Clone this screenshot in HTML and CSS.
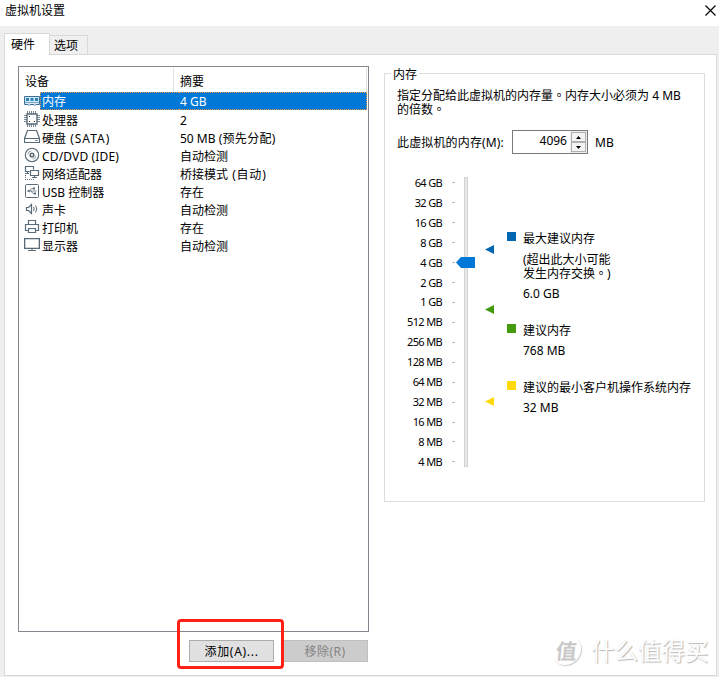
FILE: index.html
```html
<!DOCTYPE html>
<html lang="zh-CN">
<head>
<meta charset="utf-8">
<title>虚拟机设置</title>
<link rel="stylesheet" href="styles.css">
</head>
<body>
<div class="dialog">
  <header class="titlebar">
    <span>虚拟机设置</span>
    <svg class="close" width="11" height="11" viewBox="0 0 11 11"><path d="M.5.5l10 10M10.5.5l-10 10" stroke="#000" stroke-width="1.15"/></svg>
  </header>
  <nav class="tabs">
    <div class="tab active">硬件</div>
    <div class="tab">选项</div>
  </nav>
  <main class="page">
    <section class="left">
      <div class="list">
        <div class="head"><span class="name">设备</span><span class="sum">摘要</span></div>
        <div class="row selected">
          <svg class="icon" width="16" height="16" viewBox="0 0 16 16"><path d="M.5 3.5h15v8H12l-1 1-1-1H6l-1 1-1-1H.5z" fill="#d5eafa" stroke="#3d6f96"/><path d="M2 5h3v3H2zM6.500 5h3v3h-3zM11 5h3v3h-3z" fill="#2a7fbd"/><path d="M1 9.500h14" stroke="#7fa5c2"/></svg>
          <span class="name">内存</span><span class="sum">4 GB</span>
        </div>
        <div class="row">
          <svg class="icon" width="16" height="16" viewBox="0 0 16 16" fill="none" stroke="#596b78"><path d="M3.500 0v3M5.500 0v3M7.500 0v3M9.500 0v3M11.500 0v3M3.500 13v3M5.500 13v3M7.500 13v3M9.500 13v3M11.500 13v3M0 4.500h3M0 6.500h3M0 8.500h3M0 10.500h3M13 4.500h3M13 6.500h3M13 8.500h3M13 10.500h3" stroke="#78868f"/><path d="M3 3h10v10H3z" fill="#fff" stroke-width="1.400"/><path d="M5 5.500h1M10 10.500h1M5 10.500h1" stroke="#333"/></svg>
          <span class="name">处理器</span><span class="sum">2</span>
        </div>
        <div class="row">
          <svg class="icon" width="16" height="16" viewBox="0 0 16 16" fill="none" stroke="#596b78"><path d="M3.500 1.500h9l3 8v4H.5v-4zM.5 9.500h15" stroke-width="1.200"/><path d="M11.500 11.500h2"/></svg>
          <span class="name">硬盘 <span class="wide">(SATA)</span></span><span class="sum">50 MB <span class="loose">(预先分配)</span></span>
        </div>
        <div class="row">
          <svg class="icon" width="16" height="16" viewBox="0 0 16 16" fill="none" stroke="#596b78"><circle cx="8" cy="8" r="6.700" stroke-width="1.100"/><circle cx="8" cy="8" r="1.800" stroke-width="1.600"/><path d="M3.800 7.500a4.300 4.300 0 0 1 3.700-3.700M12.200 8.500a4.300 4.300 0 0 1-3.700 3.700" stroke="#9aa5ac"/></svg>
          <span class="name disc">CD/DVD (IDE)</span><span class="sum">自动检测</span>
        </div>
        <div class="row">
          <svg class="icon" width="16" height="16" viewBox="0 0 16 16" fill="none" stroke="#596b78"><path d="M5.500 6.500h-4v-5h8v3" stroke-width="1.200"/><path d="M6.500 5.500h8v5h-8zM10.500 10.500v2M8 12.500h5M3.500 6.500v2M1 8.500h4" stroke-width="1.200"/><path d="M1.500 10v5M1 14.500h9" stroke-dasharray="1 1"/></svg>
          <span class="name">网络适配器</span><span class="sum">桥接模式 <span class="auto">(自动)</span></span>
        </div>
        <div class="row">
          <svg class="icon" width="16" height="16" viewBox="0 0 16 16" fill="none" stroke="#596b78"><rect x="1.500" y="1.500" width="13" height="13" rx="1"/><path d="M3.500 8h9M5.500 8l2-2.500H10M7 8l2 2.500h2" stroke-width=".8"/><path d="M3 8l2.500-1.500v3zM9 4.500h2v2H9zM10 9.500h2v2h-2z" fill="#596b78" stroke="none"/></svg>
          <span class="name">USB 控制器</span><span class="sum">存在</span>
        </div>
        <div class="row">
          <svg class="icon" width="16" height="16" viewBox="0 0 16 16" fill="none" stroke="#596b78"><path d="M2.500 6.500h2l3-3v9l-3-3h-2z" stroke-width="1.200"/><path d="M9.500 6q1.400 2 0 4M11.500 4.500q2.600 3.500 0 7"/></svg>
          <span class="name">声卡</span><span class="sum">自动检测</span>
        </div>
        <div class="row">
          <svg class="icon" width="16" height="16" viewBox="0 0 16 16" fill="none" stroke="#596b78" stroke-width="1.200"><path d="M4.500 5.500v-4h7v4M4.500 11.500h-3v-6h13v6h-3M4.500 9.500h7v4h-7z"/></svg>
          <span class="name">打印机</span><span class="sum">存在</span>
        </div>
        <div class="row">
          <svg class="icon" width="16" height="16" viewBox="0 0 16 16" fill="none" stroke="#596b78"><path d="M.6 1.600h14.800v9.800H.6z" stroke-width="1.400"/><path d="M8 11.500v2M4 13.500h8"/></svg>
          <span class="name">显示器</span><span class="sum">自动检测</span>
        </div>
      </div>
      <div class="buttons">
        <div class="btn add">添加(A)...<i class="mark"></i></div>
        <div class="btn disabled">移除(R)</div>
      </div>
    </section>
    <section class="right">
      <fieldset class="group">
        <legend>内存</legend>
        <p class="intro">指定分配给此虚拟机的内存量<span class="stop" lang="zh-TW">。</span>内存大小必须为 4 MB<br>的倍数<span class="stop" lang="zh-TW">。</span></p>
        <div class="amount">
          <span class="label">此虚拟机的内存(M):</span>
          <div class="spin"><span class="value">4096</span>
            <div class="arrows">
              <span><svg width="5" height="3" viewBox="0 0 5 3"><path d="M0 3L2.500 0 5 3z"/></svg></span>
              <span><svg width="5" height="3" viewBox="0 0 5 3"><path d="M0 0h5L2.500 3z"/></svg></span>
            </div>
          </div>
          <span class="unit">MB</span>
        </div>
        <div class="chart">
          <div class="scale">
            <span>64 GB</span><span>32 GB</span><span>16 GB</span><span>8 GB</span><span>4 GB</span><span>2 GB</span><span>1 GB</span><span>512 MB</span><span>256 MB</span><span>128 MB</span><span>64 MB</span><span>32 MB</span><span>16 MB</span><span>8 MB</span><span>4 MB</span>
          </div>
          <div class="track"><svg class="thumb" width="19" height="11" viewBox="0 0 19 11"><path d="M0 5.500L5 0h14v11H5z" fill="#0078d7"/></svg></div>
          <svg class="pointers" width="9" height="290" viewBox="0 0 9 290"><path d="M0 72.500L9 68v9z" fill="#0067b0"/><path d="M0 132.500L9 128v9z" fill="#439a0d"/><path d="M0 224.500l9-4.500v9z" fill="#ffd90b"/></svg>
          <div class="legend">
            <div class="item max"><i></i><div><p>最大建议内存</p><p class="note">(超出此大小可能</p><p class="note second">发生内存交换<span class="stop" lang="zh-TW">。</span>)</p><p class="amt">6.0 GB</p></div></div>
            <div class="item rec"><i></i><div><p>建议内存</p><p class="amt">768 MB</p></div></div>
            <div class="item min"><i></i><div><p>建议的最小客户机操作系统内存</p><p class="amt">32 MB</p></div></div>
          </div>
        </div>
      </fieldset>
    </section>
  </main>
  <div class="brand"><span class="seal">值</span><span>什么值得买</span></div>
</div>
</body>
</html>
```
FILE: styles.css
```css
* { box-sizing: border-box; }
body {
  margin: 0;
  font: 12px/18px "Noto Sans", "Noto Sans CJK SC", sans-serif;
  color: #000;
  background: #efefef;
  text-spacing-trim: space-all;
}
p { margin: 0; }
svg { display: block; }
.dialog {
  position: relative;
  width: 719px;
  height: 677px;
  display: flex;
  flex-direction: column;
  overflow: hidden;
}
.titlebar {
  height: 26px;
  padding: 2px 3px 0 5px;
  background: #fff;
  display: flex;
  justify-content: space-between;
}
.close { margin-top: 3px; }
.tabs {
  display: flex;
  align-items: flex-end;
  height: 29px;
  padding-left: 4px;
}
.tab {
  height: 20px;
  width: 39px;
  margin-left: -1px;
  padding: 1px 0 0 5px;
  border: 1px solid #d9d9d9;
  border-left: 0;
  background: #f0f0f0;
}
.tab.active {
  height: 22px;
  width: 46px;
  margin-left: 0;
  padding: 2px 0 0 6px;
  border-left: 1px solid #d9d9d9;
  border-bottom: 0;
  background: #fff;
  z-index: 1;
}
.page {
  display: flex;
  width: 713px;
  height: 622px;
  margin: -1px 0 0 4px;
  padding: 11px 11px 0 13px;
  border: 1px solid #d9d9d9;
  background: #fff;
}
.left { width: 351px; }
.list {
  height: 566px;
  border: 1px solid #828790;
}
.head { display: flex; height: 25px; padding: 1px 1px 0 0; }
.head .name { width: 155px; padding: 5px 0 0 6px; border-right: 1px solid #e1e1e1; }
.head .sum { flex: 1; padding: 5px 0 0 6px; border-right: 1px solid #e1e1e1; }
.row { display: flex; height: 18px; padding: 0 1px 0 5px; line-height: 21px; }
.icon { flex: none; margin-top: 1px; }
.row .name { width: 139px; padding-left: 2px; }
.row .sum { padding-left: 1px; flex: 1; }
.row .disc { letter-spacing: .15px; }
.wide { letter-spacing: 1px; padding-left: 1px; }
.loose { letter-spacing: .3px; }
.auto { letter-spacing: .8px; padding-left: 1px; }
.row.selected .name, .row.selected .sum {
  background: #0078d7;
  color: #fff;
  border: dotted #e59845;
  border-width: 1px 0;
  line-height: 17px;
}
.row.selected .name { border-left-width: 1px; padding-left: 1px; }
.row.selected .sum { border-right-width: 1px; }
.buttons { display: flex; justify-content: flex-end; gap: 8px; margin: 8px 1px 0 0; }
.btn {
  position: relative;
  width: 86px;
  height: 22px;
  border: 1px solid #adadad;
  background: #e1e1e1;
  text-align: center;
  line-height: 22px;
}
.btn.add { letter-spacing: .7px; width: 85px; }
.btn.disabled { background: #ccc; border-color: #bfbfbf; color: #838383; letter-spacing: .5px; }
.mark {
  position: absolute;
  left: -13px;
  top: -22px;
  width: 107px;
  height: 50px;
  border: 3px solid #ff2116;
  border-radius: 4px;
  z-index: 2;
}
.right { margin: 7px 0 0 15px; }
.group {
  position: relative;
  width: 321px;
  height: 429px;
  margin: 0;
  padding: 0 0 0 12px;
  border: 1px solid #dcdcdc;
}
legend {
  position: absolute;
  left: 6px;
  top: -8px;
  padding: 0 2px;
  background: #fff;
}
.stop { font-family: "Noto Sans CJK TC", sans-serif; line-height: 1; }
.intro { padding-top: 15px; line-height: 14px; white-space: nowrap; }
.amount { display: flex; align-items: center; margin-top: 13px; height: 24px; }
.label { width: 115px; padding-top: 2px; letter-spacing: .15px; white-space: nowrap; }
.unit { padding-top: 2px; }
.spin {
  display: flex;
  width: 76px;
  height: 24px;
  margin-right: 7px;
  border: 1px solid #7a7a7a;
}
.value { flex: 1; text-align: right; padding-right: 3px; line-height: 20px; }
.arrows { width: 17px; padding: 1px; background: #eee; }
.arrows span {
  display: flex;
  height: 10px;
  align-items: center;
  justify-content: center;
  border: 1px solid #b0b0b0;
  background: #f4f4f4;
}
.chart { display: flex; margin-top: 19px; }
.scale {
  display: flex;
  flex-direction: column;
  width: 58px;
  font-size: 11px;
  letter-spacing: -.65px;
}
.scale span {
  display: flex;
  align-items: center;
  justify-content: flex-end;
  height: 19.93px;
  white-space: pre;
}
.scale span::after { content: ""; width: 3px; height: 1px; margin-left: 10px; background: #bbb; }
.track {
  position: relative;
  width: 4px;
  height: 290px;
  margin: 4px 0 0 9px;
  border: 1px solid #d2d4d4;
  background: #e6e9e8;
}
.thumb { position: absolute; left: -9px; top: 79px; }
.pointers { margin: 4px 0 0 17px; }
.legend { margin-left: 13px; }
.item { display: flex; white-space: nowrap; }
.item i { flex: none; width: 9px; height: 9px; margin: 4px 7px 0 0; }
.max i { background: #0067b0; }
.rec i { background: #439a0d; }
.min i { background: #ffd90b; }
.max { margin-top: 55px; }
.max > div, .rec > div, .min > div { margin-top: 2px; }
.note { line-height: 14px; margin-top: 5px; }
.note.second { margin-top: 0; }
.max .amt { margin-top: 4px; }
.rec { margin-top: 17px; }
.rec .amt, .min .amt { margin-top: 2px; }
.min { margin-top: 17px; }
.brand {
  position: absolute;
  left: 552px;
  top: 635px;
  display: flex;
  align-items: center;
  gap: 10px;
  font: 23.5px/30px "Noto Sans CJK SC", sans-serif;
  color: #fff;
  text-shadow: 1px 1px 1px #b8b8b8, 0 0 1px #ddd;
}
.seal {
  width: 29px;
  height: 29px;
  border-radius: 50%;
  box-shadow: 1px 1px 1px #ccc;
  text-align: center;
  font-size: 21px;
  line-height: 28px;
  font-weight: 700;
  color: #c9c9c9;
  text-shadow: none;
  transform: skewX(-6deg);
}
```
